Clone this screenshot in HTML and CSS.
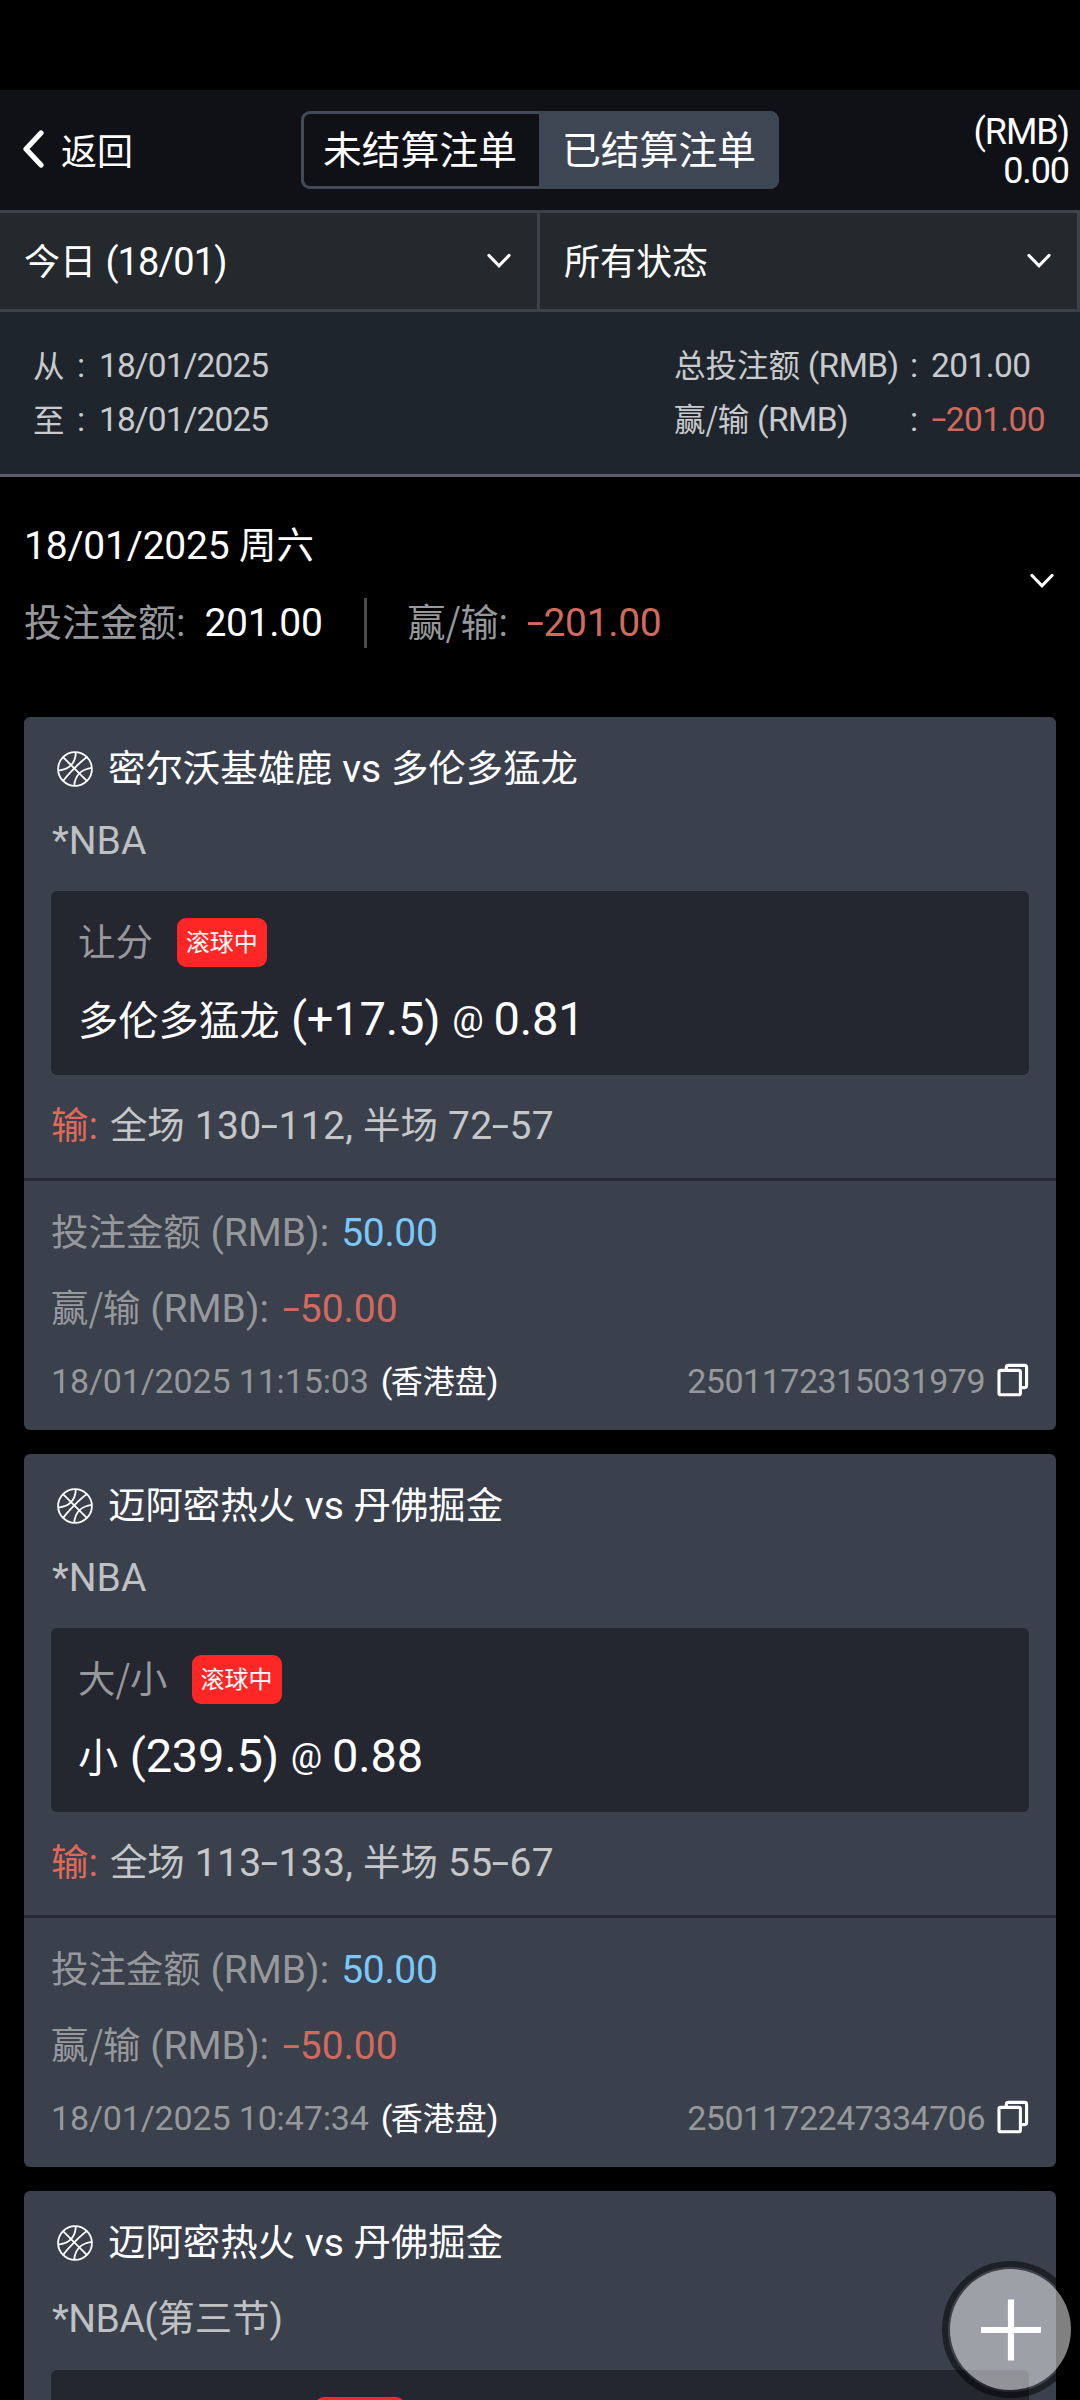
FILE: index.html
```
<!DOCTYPE html>
<html lang="zh-CN">
<head>
<meta charset="utf-8">
<title>已结算注单</title>
<link rel="stylesheet" href="styles.css">
</head>
<body>
<svg class="defs" aria-hidden="true">
  <symbol id="ball" viewBox="0 0 36 36">
    <g fill="none" stroke="currentColor" stroke-width="1.8">
      <circle cx="18" cy="18" r="16.9"/>
      <path d="M5.8 5.8 30.3 30.4M30.4 5.8C24 10 10 24 5.8 30.4M18.8 1.2C18.6 12 12 19 1.2 19.6M34.8 16.8C25 18 18 24 17.2 34.8"/>
    </g>
  </symbol>
  <symbol id="copy" viewBox="0 0 32 34">
    <g fill="none" stroke="currentColor" stroke-width="3.1" stroke-linejoin="round">
      <rect x="2" y="7.4" width="21.4" height="24.4" rx="1.6"/>
      <path d="M9.3 7V4.4a2 2 0 0 1 2-2H27.6a2 2 0 0 1 2 2V22.6a2 2 0 0 1-2 2H24"/>
    </g>
  </symbol>
  <symbol id="down" viewBox="0 0 24 16">
    <path d="M2 2.5 12 12.8 22 2.5" fill="none" stroke="currentColor" stroke-width="3.2" stroke-linecap="round"/>
  </symbol>
</svg>
<div class="screen">
  <div class="status"></div>
  <header class="top">
    <div class="back"><svg class="back-icon" viewBox="0 0 22 38"><path d="M19 3 4 19 19 35" fill="none" stroke="currentColor" stroke-width="5.2" stroke-linecap="round" stroke-linejoin="round"/></svg><span>返回</span></div>
    <div class="tabs"><div class="tab">未结算注单</div><div class="tab tab-on">已结算注单</div></div>
    <div class="balance"><div>(RMB)</div><div>0.00</div></div>
  </header>
  <div class="filters">
    <div class="filter"><div class="line"><span class="c">今日</span> <span class="range">(18/01)</span></div><svg class="down"><use href="#down"/></svg></div>
    <div class="filter"><div class="line"><span class="c">所有状态</span></div><svg class="down"><use href="#down"/></svg></div>
  </div>
  <div class="summary">
    <div class="dates">
      <span class="c">从</span><span>:</span><span>18/01/2025</span>
      <span class="c">至</span><span>:</span><span>18/01/2025</span>
    </div>
    <div class="totals">
      <span><span class="c">总投注额</span> (RMB)</span><span>:</span><span>201.00</span>
      <span><span class="c">赢/输</span> (RMB)</span><span>:</span><span class="red"><span class="dash">-</span>201.00</span>
    </div>
  </div>
  <section class="day">
    <div>
      <div class="day-title">18/01/2025 <span class="c">周六</span></div>
      <div class="day-sums">
        <div><span class="muted"><span class="c">投注金额</span>:</span><span class="amount">201.00</span></div>
        <div class="bar"></div>
        <div><span class="muted"><span class="c">赢/输</span>:</span><span class="amount red"><span class="dash">-</span>201.00</span></div>
      </div>
    </div>
    <svg class="down"><use href="#down"/></svg>
  </section>
  <main class="cards">
    <article class="card">
      <h2 class="match"><svg class="ball"><use href="#ball"/></svg><span><span class="c">密尔沃基雄鹿</span> vs <span class="c">多伦多猛龙</span></span></h2>
      <div class="league">*NBA</div>
      <div class="bet">
        <div class="market"><span class="c">让分</span><span class="live">滚球中</span></div>
        <div class="pick"><span class="team">多伦多猛龙</span> (+17.5)<span class="at">@</span>0.81</div>
      </div>
      <div class="result"><span class="lost"><span class="c">输</span>:</span><span class="score"><span class="c">全场</span> 130<span class="dash">-</span>112, <span class="c">半场</span> 72<span class="dash">-</span>57</span></div>
      <div class="foot">
        <div class="money"><span class="muted"><span class="c">投注金额</span> (RMB):</span><span class="blue">50.00</span></div>
        <div class="money"><span class="muted"><span class="c">赢/输</span> (RMB):</span><span class="red"><span class="dash">-</span>50.00</span></div>
        <div class="meta"><span class="muted time">18/01/2025 11:15:03</span><span class="odds">(<span class="c">香港盘</span>)</span><span class="muted id">2501172315031979</span><svg class="copy"><use href="#copy"/></svg></div>
      </div>
    </article>
    <article class="card">
      <h2 class="match"><svg class="ball"><use href="#ball"/></svg><span><span class="c">迈阿密热火</span> vs <span class="c">丹佛掘金</span></span></h2>
      <div class="league">*NBA</div>
      <div class="bet">
        <div class="market"><span class="c">大/小</span><span class="live">滚球中</span></div>
        <div class="pick"><span class="team">小</span> (239.5)<span class="at">@</span>0.88</div>
      </div>
      <div class="result"><span class="lost"><span class="c">输</span>:</span><span class="score"><span class="c">全场</span> 113<span class="dash">-</span>133, <span class="c">半场</span> 55<span class="dash">-</span>67</span></div>
      <div class="foot">
        <div class="money"><span class="muted"><span class="c">投注金额</span> (RMB):</span><span class="blue">50.00</span></div>
        <div class="money"><span class="muted"><span class="c">赢/输</span> (RMB):</span><span class="red"><span class="dash">-</span>50.00</span></div>
        <div class="meta"><span class="muted time">18/01/2025 10:47:34</span><span class="odds">(<span class="c">香港盘</span>)</span><span class="muted id">2501172247334706</span><svg class="copy"><use href="#copy"/></svg></div>
      </div>
    </article>
    <article class="card">
      <h2 class="match"><svg class="ball"><use href="#ball"/></svg><span><span class="c">迈阿密热火</span> vs <span class="c">丹佛掘金</span></span></h2>
      <div class="league league-part">*NBA(<span class="c">第三节</span>)</div>
      <div class="bet">
        <div class="market market-wide"><span class="live"></span></div>
      </div>
    </article>
  </main>
  <button class="fab" aria-label="+"><svg viewBox="0 0 60 62"><path d="M30 .5V61.500M0 31H60" stroke="#fff" stroke-width="6.200"/></svg></button>
</div>
</body>
</html>
```
FILE: styles.css
```
* { box-sizing: border-box; }
body {
  margin: 0;
  background: #000;
  color: #fff;
  font-family: Roboto, "Noto Sans CJK SC", sans-serif;
  font-size: 39px;
  white-space: nowrap;
}
svg { display: block; flex: none; }
.defs { position: absolute; width: 0; height: 0; }
.screen { position: relative; width: 1080px; height: 2400px; overflow: hidden; }
.c { font-family: "Noto Sans CJK SC", sans-serif; font-size: .96em; line-height: 1; letter-spacing: 0; }
.dash { display: inline-block; line-height: 1; margin: 0 3px; transform: translateY(-1px) scaleX(1.6); }
.muted { color: #96989b; }
.red { color: #d16a5c; }
.blue { color: #7bc8fb; letter-spacing: -.3px; }
.down { width: 24px; height: 16px; }

.status { height: 90px; }
.top {
  display: grid;
  grid-template-columns: 301px 478px 1fr;
  align-items: center;
  height: 120px;
  background: #101116;
}
.back { display: flex; align-items: center; gap: 17px; padding: 0 0 3px 22px; font: 36px/40px "Noto Sans CJK SC", sans-serif; }
.back-icon { width: 22px; height: 38px; }
.tabs { display: grid; grid-template-columns: 238px 240px; height: 78px; border-radius: 9px; overflow: hidden; background: #3e4653; }
.tab {
  padding-left: 19px;
  border: 3px solid #414a56;
  border-right: 0;
  border-radius: 9px 0 0 9px;
  background: #101116;
  font: 38.8px/67px "Noto Sans CJK SC", sans-serif;
}
.tab-on { padding-left: 20px; border-color: #3e4653; border-radius: 0; background: #3e4653; }
.balance { padding: 3px 11px 0 0; font-size: 36px; line-height: 39px; text-align: right; letter-spacing: -1.1px; }

.filters { display: grid; grid-template-columns: 540px 540px; height: 102px; }
.filter {
  display: flex;
  align-items: center;
  justify-content: space-between;
  padding: 0 26px 0 24px;
  border: solid #3c4248;
  border-width: 3px 3px 3px 0;
  background: #24292d;
  font-size: 38px;
}
.filter .c { font-size: 36px; }
.line { padding-top: 2px; }
.range { letter-spacing: -.9px; }

.summary {
  display: flex;
  justify-content: space-between;
  height: 165px;
  padding: 27px 0 0 33px;
  border-bottom: 3px solid #5b6069;
  background: #1f252d;
  color: #c8cacc;
  font-size: 33.500px;
  line-height: 54px;
}
.dates { display: grid; grid-template-columns: 44px 22px auto; grid-auto-rows: 54px; letter-spacing: -.9px; }
.totals { display: grid; grid-template-columns: 236px 21px 149px; grid-auto-rows: 54px; letter-spacing: -.6px; }
.summary .c { line-height: 50px; font-size: 31.500px; }
.totals .c { line-height: 1; }

.day { display: flex; justify-content: space-between; padding: 43px 26px 0 24px; height: 240px; }
.day-title { height: 52px; line-height: 52px; letter-spacing: -.2px; }
.day-sums { display: flex; align-items: center; height: 52px; margin-top: 25px; line-height: 52px; }
.day-sums .c { font-size: 38px; }
.amount { margin-left: 19px; letter-spacing: -.3px; }
.bar { width: 3px; height: 50px; margin: 0 41px; background: #4b4b4b; }
.day .down { margin-top: 53px; }

.cards { display: grid; gap: 24px; padding: 0 24px; }
.card { height: 713px; padding-top: 26px; border-radius: 6px; background: #3a404c; }
.match { display: flex; align-items: center; height: 52px; margin: 0; padding-left: 33px; font-size: 39px; font-weight: 400; line-height: 52px; }
.ball { width: 36px; height: 36px; margin-right: 15px; }
.league { height: 52px; margin: 20px 0 24px; padding-left: 28px; color: #bfc0c3; line-height: 52px; }
.league-part { height: 60px; margin-bottom: 21px; line-height: 60px; letter-spacing: -.5px; }
.bet { height: 184px; margin: 0 27px; padding: 27px 27px 0; border-radius: 6px; background: #242630; }
.market { display: flex; align-items: center; height: 49px; color: #97989a; }
.market .c { padding-bottom: 3px; }
.market-wide { padding-left: 213px; }
.live {
  width: 90px;
  height: 49px;
  margin-left: 24px;
  border-radius: 9px;
  background: #ff2626;
  color: #fff;
  font: 24px/45px "Noto Sans CJK SC", sans-serif;
  text-align: center;
}
.pick { height: 60px; margin-top: 22px; font-size: 47px; line-height: 60px; letter-spacing: -.2px; }
.team { font: 40.300px/1 "Noto Sans CJK SC", sans-serif; letter-spacing: 0; }
.at { margin: 0 10px 0 12px; font-size: 35px; line-height: 1; vertical-align: 4px; }
.result { height: 103px; padding-left: 27px; color: #c5c7c9; line-height: 103px; }
.lost { color: #e06a5a; }
.score { margin-left: 12px; letter-spacing: .3px; }
.foot { height: 252px; padding: 14px 27px 0; border-top: 3px solid #242933; }
.money { height: 76px; line-height: 76px; }
.money .blue { margin-left: 12px; }
.money .red { margin-left: 14px; }
.meta { display: flex; align-items: center; height: 69px; font-size: 34px; line-height: 69px; }
.time { letter-spacing: -.15px; }
.odds { margin-left: 12px; letter-spacing: -1.5px; }
.odds .c { font-size: 32px; }
.id { margin-left: auto; margin-right: 12px; letter-spacing: -.5px; }
.copy { width: 32px; height: 34px; margin-bottom: 4px; }

.fab {
  position: absolute;
  top: 2269px;
  left: 950px;
  display: grid;
  place-items: center;
  width: 121px;
  height: 121px;
  padding: 0;
  border: 0;
  border-radius: 50%;
  background: rgba(255, 255, 255, .5);
  outline: 6px solid rgba(0, 0, 0, .5);
  outline-offset: 2px;
}
.fab svg { width: 60px; height: 62px; }
```
